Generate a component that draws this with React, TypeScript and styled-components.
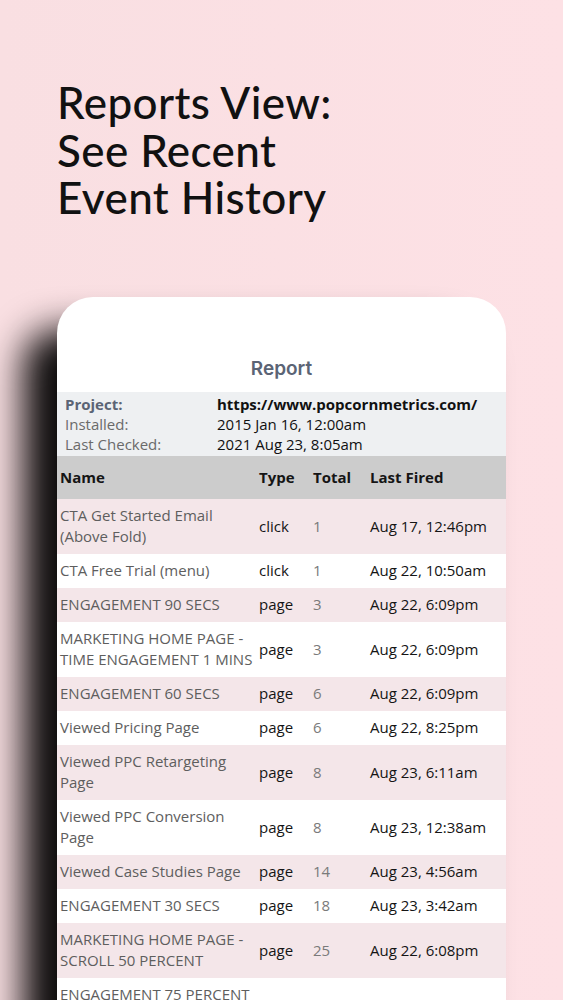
import React from "react";
import styled, { createGlobalStyle } from "styled-components";

const Global = createGlobalStyle`
  html, body {
    margin: 0;
    padding: 0;
    background: #fce1e5;
  }
  body {
    width: 563px;
    height: 1000px;
    overflow: hidden;
  }
`;

const Page = styled.div`
  width: 563px;
  height: 1000px;
  overflow: hidden;
  background: linear-gradient(90deg, #f9dfe2 0%, #fde1e5 100%);
  padding-top: 79px;
  box-sizing: border-box;
`;

const Title = styled.h1`
  margin: 0 0 75px 57px;
  font-family: Lato, "Open Sans", sans-serif;
  font-weight: 500;
  font-size: 44px;
  line-height: 47.5px;
  color: #111;
  letter-spacing: 0.4px;
`;

const Card = styled.div`
  margin-left: 57px;
  width: 449px;
  background: #fff;
  border-radius: 36px 36px 0 0;
  box-shadow: -34px 32px 36px rgba(0, 0, 0, 0.95);
  font-family: "Open Sans", sans-serif;
  font-size: 15px;
`;

const CardHeader = styled.div`
  height: 95px;
  display: flex;
  align-items: flex-end;
  justify-content: center;
  padding-bottom: 10px;
  box-sizing: border-box;
  font-family: Inter, "Open Sans", sans-serif;
  font-weight: 600;
  font-size: 19px;
  line-height: 26px;
  color: #5b6475;
`;

const Info = styled.div`
  background: #eef0f2;
  padding: 2px 8px;
  display: grid;
  grid-template-columns: 152px 1fr;
  line-height: 20px;
`;

const Label = styled.div<{ $strong?: boolean }>`
  color: ${(p) => (p.$strong ? "#5b6475" : "#6a6a6a")};
  font-weight: ${(p) => (p.$strong ? 700 : 400)};
`;

const Value = styled.div<{ $strong?: boolean }>`
  color: #111;
  font-weight: ${(p) => (p.$strong ? 700 : 400)};
`;

const Row = styled.div<{ $bg: string; $head?: boolean }>`
  display: grid;
  grid-template-columns: 199px 54px 57px 1fr;
  align-items: center;
  background: ${(p) => p.$bg};
  min-height: ${(p) => (p.$head ? "43px" : "34px")};
  padding: ${(p) => (p.$head ? "0" : "6.5px 0")};
  box-sizing: border-box;
  line-height: 21px;
  font-weight: ${(p) => (p.$head ? 700 : 400)};
  color: #111;
`;

const Cell = styled.div<{ $tone?: "name" | "dark" | "num" }>`
  padding-left: 3px;
  color: ${(p) =>
    p.$tone === "name" ? "#5e5e5e" : p.$tone === "num" ? "#7a7a7a" : "#151515"};
`;

const rows = [
  ["CTA Get Started Email (Above Fold)", "click", "1", "Aug 17, 12:46pm"],
  ["CTA Free Trial (menu)", "click", "1", "Aug 22, 10:50am"],
  ["ENGAGEMENT 90 SECS", "page", "3", "Aug 22, 6:09pm"],
  ["MARKETING HOME PAGE - TIME ENGAGEMENT 1 MINS", "page", "3", "Aug 22, 6:09pm"],
  ["ENGAGEMENT 60 SECS", "page", "6", "Aug 22, 6:09pm"],
  ["Viewed Pricing Page", "page", "6", "Aug 22, 8:25pm"],
  ["Viewed PPC Retargeting Page", "page", "8", "Aug 23, 6:11am"],
  ["Viewed PPC Conversion Page", "page", "8", "Aug 23, 12:38am"],
  ["Viewed Case Studies Page", "page", "14", "Aug 23, 4:56am"],
  ["ENGAGEMENT 30 SECS", "page", "18", "Aug 23, 3:42am"],
  ["MARKETING HOME PAGE - SCROLL 50 PERCENT", "page", "25", "Aug 22, 6:08pm"],
  ["ENGAGEMENT 75 PERCENT SCROLL", "page", "25", "Aug 22, 6:10pm"],
];

export default function App() {
  return (
    <Page>
      <Global />
      <Title>
        Reports View:
        <br />
        See Recent
        <br />
        Event History
      </Title>
      <Card>
        <CardHeader>Report</CardHeader>
        <Info>
          <Label $strong>Project:</Label>
          <Value $strong>https://www.popcornmetrics.com/</Value>
          <Label>Installed:</Label>
          <Value>2015 Jan 16, 12:00am</Value>
          <Label>Last Checked:</Label>
          <Value>2021 Aug 23, 8:05am</Value>
        </Info>
        <Row $bg="#cccccc" $head>
          <Cell>Name</Cell>
          <Cell>Type</Cell>
          <Cell>Total</Cell>
          <Cell>Last Fired</Cell>
        </Row>
        {rows.map((r, i) => (
          <Row key={i} $bg={i % 2 === 0 ? "#f4e6e9" : "#ffffff"}>
            <Cell $tone="name">{r[0]}</Cell>
            <Cell $tone="dark">{r[1]}</Cell>
            <Cell $tone="num">{r[2]}</Cell>
            <Cell $tone="dark">{r[3]}</Cell>
          </Row>
        ))}
      </Card>
    </Page>
  );
}
